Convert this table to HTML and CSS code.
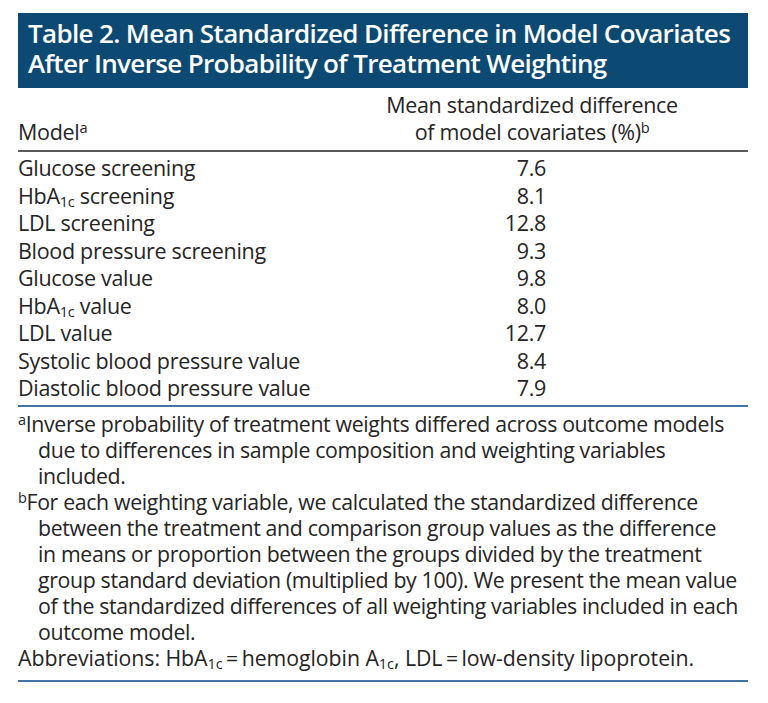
FILE: index.html
```html
<!DOCTYPE html>
<html lang="en">
<head>
<meta charset="utf-8">
<title>Table 2</title>
<link rel="stylesheet" href="styles.css">
</head>
<body>
<div class="exhibit">
  <h1 class="title"><span class="title-line">Table 2. Mean Standardized Difference in Model Covariates</span><span class="title-line">After Inverse Probability of Treatment Weighting</span></h1>
  <table class="data">
    <thead>
      <tr>
        <th class="col-model">Model<sup>a</sup></th>
        <th class="col-value">Mean standardized difference<br>of model covariates (%)<sup>b</sup></th>
      </tr>
    </thead>
    <tbody>
      <tr><td>Glucose screening</td><td class="num">7.6</td></tr>
      <tr><td>HbA<sub>1c</sub> screening</td><td class="num">8.1</td></tr>
      <tr><td>LDL screening</td><td class="num">12.8</td></tr>
      <tr><td>Blood pressure screening</td><td class="num">9.3</td></tr>
      <tr><td>Glucose value</td><td class="num">9.8</td></tr>
      <tr><td>HbA<sub>1c</sub> value</td><td class="num">8.0</td></tr>
      <tr><td>LDL value</td><td class="num">12.7</td></tr>
      <tr><td>Systolic blood pressure value</td><td class="num">8.4</td></tr>
      <tr><td>Diastolic blood pressure value</td><td class="num">7.9</td></tr>
    </tbody>
  </table>
  <div class="notes">
    <p class="note"><sup>a</sup>Inverse probability of treatment weights differed across outcome models<br>due to differences in sample composition and weighting variables<br>included.</p>
    <p class="note"><sup>b</sup>For each weighting variable, we calculated the standardized difference<br>between the treatment and comparison group values as the difference<br>in means or proportion between the groups divided by the treatment<br>group standard deviation (multiplied by 100). We present the mean value<br>of the standardized differences of all weighting variables included in each<br>outcome model.</p>
    <p class="abbr">Abbreviations: HbA<sub>1c</sub>&#8201;=&#8201;hemoglobin A<sub>1c</sub>, LDL&#8201;=&#8201;low-density lipoprotein.</p>
  </div>
</div>
</body>
</html>
```

FILE: styles.css
```css
html, body {
  margin: 0;
  padding: 0;
  background: #ffffff;
}

body {
  font-family: "Open Sans", "Noto Sans", sans-serif;
  color: #262424;
}

.exhibit {
  width: 730px;
  margin: 0 0 0 18px;
  padding-top: 13px;
}

.title {
  margin: 0;
  height: 75px;
  box-sizing: border-box;
  padding: 5px 0 0 10px;
  background: #0c4a74;
  color: #ffffff;
  font-size: 26px;
  font-weight: 600;
  line-height: 30px;
  letter-spacing: -0.65px;
  white-space: nowrap;
}

.title-line {
  display: block;
  height: 30px;
}

.data {
  width: 100%;
  border-collapse: collapse;
  font-size: 21.5px;
  line-height: 27.5px;
  letter-spacing: -0.3px;
}

.data th {
  font-weight: 400;
  padding: 3px 0 5px;
  border-bottom: 2px solid #5a5a5a;
  vertical-align: bottom;
  line-height: 27px;
}

.col-model {
  text-align: left;
}

.col-value {
  width: 432px;
  text-align: center;
}

.data td {
  padding: 0;
  white-space: nowrap;
}

.data tbody tr:first-child td {
  padding-top: 2px;
}

.data tbody tr:last-child td {
  padding-bottom: 3.5px;
}

.data td.num {
  text-align: right;
  padding-right: 202px;
}

.data tbody {
  border-bottom: 2px solid #4474a5;
}

sup {
  font-size: 0.68em;
  line-height: 0;
  vertical-align: 0.45em;
}

sub {
  font-size: 0.68em;
  line-height: 0;
  vertical-align: -0.2em;
}

.notes {
  margin-top: 4px;
  padding-bottom: 9px;
  border-bottom: 2px solid #4474a5;
  font-size: 21.3px;
  line-height: 26px;
  letter-spacing: -0.35px;
  white-space: nowrap;
}

.note {
  margin: 0;
  padding-left: 20px;
  text-indent: -20px;
}

.abbr {
  margin: 0;
  letter-spacing: -0.05px;
}
```
